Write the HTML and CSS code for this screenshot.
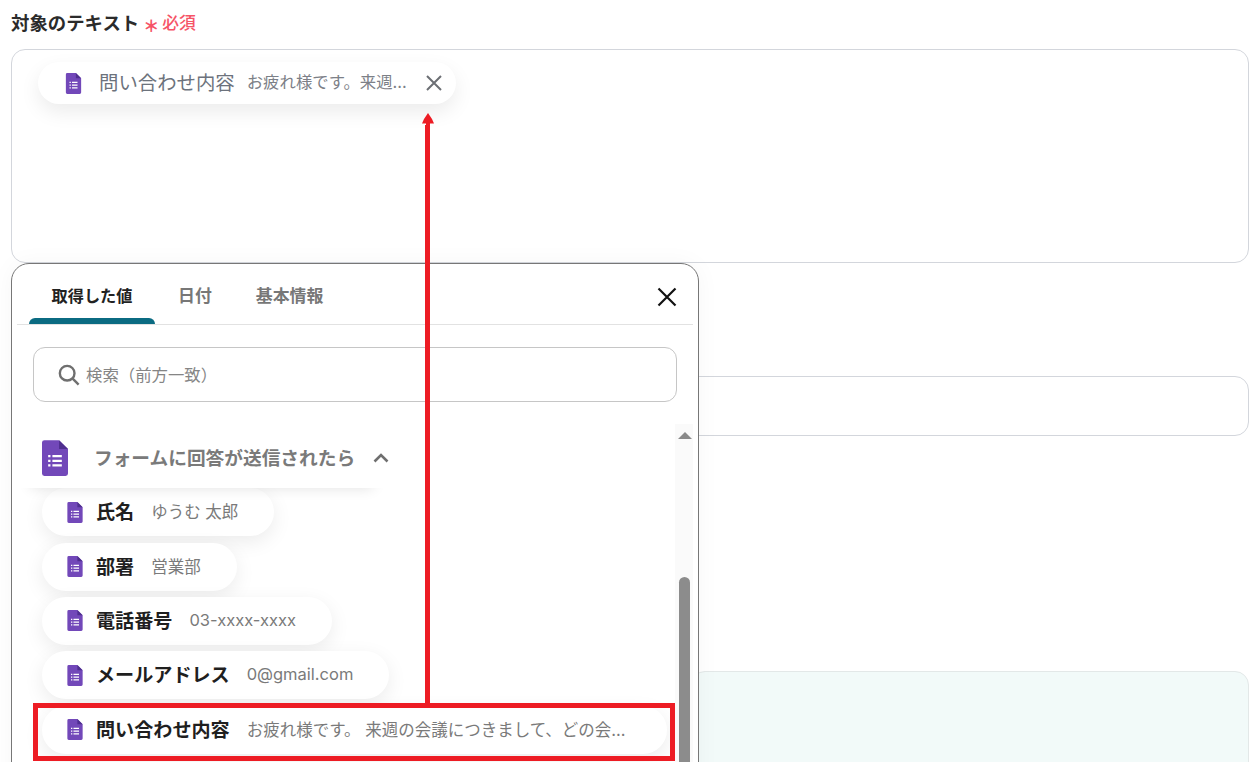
FILE: index.html
```html
<!DOCTYPE html>
<html lang="ja">
<head>
<meta charset="utf-8">
<title>対象のテキスト</title>
<link rel="stylesheet" href="styles.css">
</head>
<body>
<svg class="defs" width="0" height="0" aria-hidden="true">
  <symbol id="form" viewBox="0 0 16 22">
    <path fill="#7248b9" d="M1.5 0H10.5L16 5.5V20.5A1.5 1.5 0 0 1 14.5 22H1.5A1.5 1.5 0 0 1 0 20.5V1.5A1.5 1.5 0 0 1 1.5 0Z"/>
    <path fill="#4f2f8f" d="M10.5 0L16 5.5H10.5Z"/>
    <path fill="#fff" d="M3.8 9.2h1.4v1.4H3.8ZM6.4 9.2h5.8v1.4H6.4ZM3.8 12h1.4v1.4H3.8ZM6.4 12h5.8v1.4H6.4ZM3.8 14.8h1.4v1.4H3.8ZM6.4 14.8h5.8v1.4H6.4Z"/>
  </symbol>
</svg>
<main class="page">
  <div class="field-label">
    <span class="label-text">対象のテキスト</span>
    <span class="req-star">＊</span>
    <span class="req-text">必須</span>
  </div>
  <div class="textbox">
    <div class="token">
      <svg class="icon-token"><use href="#form"/></svg>
      <span class="token-name">問い合わせ内容</span>
      <span class="token-value">お疲れ様です。来週...</span>
      <svg class="token-close" viewBox="0 0 18 18"><path d="M2 2L16 16M16 2L2 16"/></svg>
    </div>
  </div>
  <div class="inputbox"></div>
  <div class="notice"></div>
</main>

<section class="popup">
  <header class="tabs">
    <div class="tab tab-active">取得した値</div>
    <div class="tab tab-date">日付</div>
    <div class="tab tab-basic">基本情報</div>
    <svg class="popup-close" viewBox="0 0 20 20"><path d="M1.5 1.5L18.5 18.5M18.5 1.5L1.5 18.5"/></svg>
  </header>
  <div class="search">
    <svg class="search-icon" viewBox="0 0 24 24"><circle cx="10" cy="10" r="8"/><path d="M16 16L22.5 22.5"/></svg>
    <span class="search-text">検索（前方一致）</span>
  </div>
  <div class="list-area">
    <div class="list">
      <div class="group-head">
        <svg class="icon-group"><use href="#form"/></svg>
        <span class="group-title">フォームに回答が送信されたら</span>
        <svg class="chevron" viewBox="0 0 16 10"><path d="M1.5 8.5L8 2L14.5 8.5"/></svg>
      </div>
      <div class="chips">
        <div class="chip"><svg class="icon-chip"><use href="#form"/></svg><b class="chip-name">氏名</b><span class="chip-value">ゆうむ 太郎</span></div>
        <div class="chip"><svg class="icon-chip"><use href="#form"/></svg><b class="chip-name">部署</b><span class="chip-value">営業部</span></div>
        <div class="chip"><svg class="icon-chip"><use href="#form"/></svg><b class="chip-name">電話番号</b><span class="chip-value">03-xxxx-xxxx</span></div>
        <div class="chip"><svg class="icon-chip"><use href="#form"/></svg><b class="chip-name">メールアドレス</b><span class="chip-value">0@gmail.com</span></div>
        <div class="chip chip-long"><svg class="icon-chip"><use href="#form"/></svg><b class="chip-name">問い合わせ内容</b><span class="chip-value">お疲れ様です。 来週の会議につきまして、どの会...</span></div>
      </div>
    </div>
    <div class="scrollbar">
      <span class="scroll-up"></span>
      <span class="scroll-thumb"></span>
    </div>
  </div>
</section>

<div class="mark-box"></div>
<div class="mark-line"></div>
<svg class="mark-head" viewBox="0 0 12 15"><path d="M6 0L10 6L12 10.5H8V15H4V10.5H0L2 6Z"/></svg>
</body>
</html>
```
FILE: styles.css
```css
* { box-sizing: border-box; }
html, body { margin: 0; height: 100%; overflow: hidden; background: #fff; }
body { font-family: Inter, "Noto Sans CJK JP", sans-serif; color: #222; }
.defs { position: absolute; }

.page { padding: 10px 7px 0 11px; }
.field-label { display: flex; align-items: center; height: 26px; }
.label-text { font-size: 18.4px; font-weight: 700; color: #2b2b2b; line-height: 26px; }
.req-star { margin-left: 4px; margin-right: 3px; color: #f65467; font-size: 16px; font-weight: 900; line-height: 26px; height: 26px; padding-top: 3px; }
.req-text { font-size: 16.8px; font-weight: 500; color: #f65467; line-height: 26px; }

.textbox { margin-top: 13px; height: 214px; border: 1px solid #d3d6dc; border-radius: 14px; padding: 12px 26px; }
.token { display: flex; align-items: center; width: 418px; height: 42px; padding-left: 27px; background: #fff; border-radius: 21px; box-shadow: 0 8px 20px rgba(0,0,0,.08); }
.icon-token { width: 17px; height: 21px; flex: none; }
.token-name { margin-left: 17px; margin-bottom: 4px; font-size: 19.4px; color: #6c727c; white-space: nowrap; }
.token-value { margin-left: 12px; margin-bottom: 4px; font-size: 16.4px; color: #7c8087; white-space: nowrap; }
.token-close { width: 18px; height: 18px; margin-left: auto; margin-right: 13px; flex: none; fill: none; stroke: #6c6f74; stroke-width: 2; }

.inputbox { margin-top: 113px; height: 60px; border: 1px solid #d3d6dc; border-radius: 14px; }
.notice { margin-top: 235px; margin-left: 680px; height: 120px; background: #f2faf9; border: 1px solid #e3e8e8; border-radius: 14px; }

.popup { position: absolute; left: 11px; top: 263px; width: 688px; height: 540px; background: #fff; border: 1px solid #777; border-radius: 18px; box-shadow: 0 0 24px rgba(0,0,0,.04); padding: 0 5px; }
.tabs { position: relative; display: flex; height: 61px; border-bottom: 1px solid #e2e2e2; }
.tab { font-size: 16.9px; font-weight: 700; color: #777; padding-top: 20px; line-height: 24px; }
.tab-active { width: 126px; margin-left: 12px; text-align: center; font-size: 16.2px; color: #222; position: relative; }
.tab-active::after { content: ""; position: absolute; left: 0; right: 0; bottom: 0; height: 6px; background: #0b6b82; border-radius: 6px 6px 0 0; }
.tab-date { margin-left: 23px; }
.tab-basic { margin-left: 44px; }
.popup-close { width: 20px; height: 20px; position: absolute; right: 16px; top: 23px; fill: none; stroke: #111; stroke-width: 2.2; }

.search { display: flex; align-items: center; margin: 22px 16px 0 16px; height: 55px; border: 1px solid #c6c6c6; border-radius: 12px; padding-left: 24px; }
.search-icon { width: 22px; height: 22px; flex: none; fill: none; stroke: #6f6f6f; stroke-width: 2.6; }
.search-text { margin-left: 6px; margin-bottom: 2px; font-size: 16.4px; color: #858585; }

.list-area { display: flex; margin-top: 22px; height: 400px; }
.list { flex: 1; min-width: 0; position: relative; }
.group-head { position: relative; z-index: 1; display: flex; align-items: center; height: 64.4px; padding-left: 25px; background: #fff; box-shadow: 0 14px 14px -14px rgba(0,0,0,.12); width: 370px; }
.icon-group { width: 26px; height: 36px; flex: none; margin-top: 3.6px; }
.group-title { margin-left: 26px; font-size: 18.7px; font-weight: 700; color: #7a7a7a; white-space: nowrap; }
.chevron { width: 16px; height: 10px; margin-left: 18px; flex: none; fill: none; stroke: #6f6f6f; stroke-width: 2.6; margin-top: 4.6px; }

.chips { display: flex; flex-direction: column; align-items: flex-start; gap: 6.3px; padding: 0 0 0 25px; }
.chip { display: flex; align-items: center; height: 48px; padding: 0 36px 0 25px; background: #fff; border-radius: 24px; box-shadow: 0 6px 20px rgba(0,0,0,.08); white-space: nowrap; }
.chip-long { padding-right: 41px; }
.icon-chip { width: 16px; height: 21px; flex: none; }
.chip-name { margin-left: 13px; margin-bottom: 2px; font-size: 19.1px; font-weight: 700; color: #1f1f1f; }
.chip-value { margin-left: 17px; margin-bottom: 2px; font-size: 16.5px; color: #7a7a7a; }

.scrollbar { position: relative; width: 18px; flex: none; background: #fafafa; }
.scroll-up { position: absolute; left: 3px; top: 8px; width: 0; height: 0; border-left: 7px solid transparent; border-right: 7px solid transparent; border-bottom: 7px solid #8a8a8a; }
.scroll-thumb { position: absolute; left: 4px; top: 153px; width: 11px; height: 300px; background: #8c8c8c; border-radius: 6px 6px 0 0; }

.mark-box { position: absolute; left: 33px; top: 703px; width: 642px; height: 58px; border: 5px solid #ed1c24; }
.mark-line { position: absolute; left: 425px; top: 125px; width: 5px; height: 578px; background: #ed1c24; }
.mark-head { position: absolute; left: 421.5px; top: 113px; width: 12px; height: 15px; fill: #ed1c24; }
```
